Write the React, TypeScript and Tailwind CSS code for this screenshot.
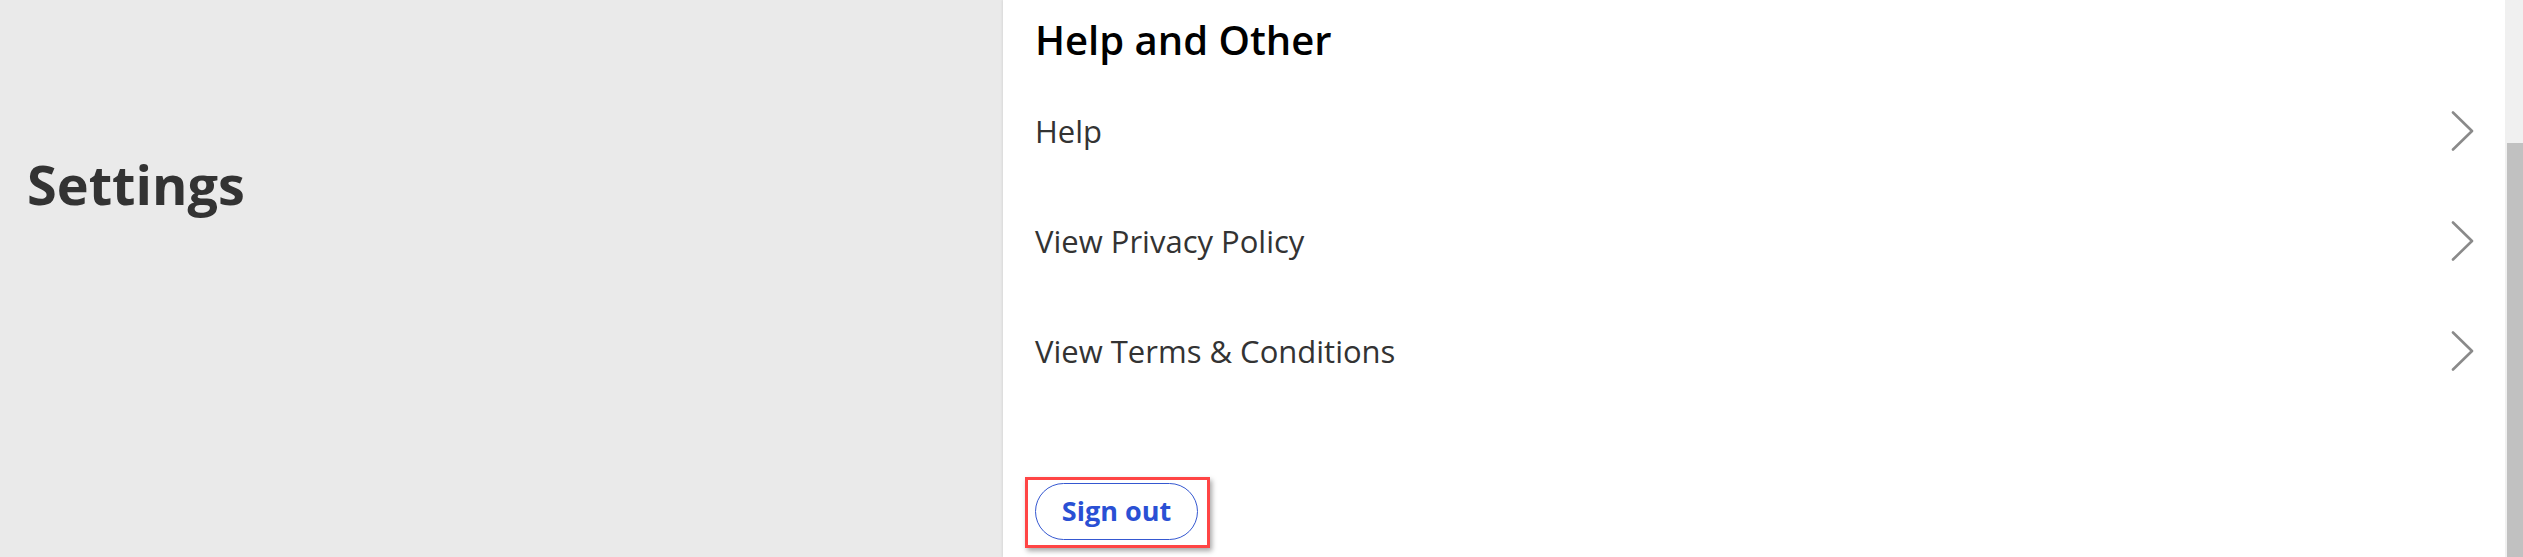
import { ReactNode } from "react";

const LINKS = ["Help", "View Privacy Policy", "View Terms & Conditions"];

function Chevron() {
  return (
    <svg width="23" height="40" viewBox="0 0 23 40" fill="none" className="shrink-0">
      <path d="M2 1.5 L21 20 L2 38.5" stroke="#8a8a8a" strokeWidth="2.6" strokeLinecap="round" strokeLinejoin="round" />
    </svg>
  );
}

function Row({ children }: { children: ReactNode }) {
  return (
    <div className="flex h-[110px] items-center justify-between pr-[31px]">
      <span className="text-[31px] leading-none text-[#333333]">{children}</span>
      <Chevron />
    </div>
  );
}

export default function App() {
  return (
    <div
      className="flex h-[557px] w-full overflow-hidden bg-[#eaeaea]"
      style={{ fontFamily: '"Open Sans", "Noto Sans", sans-serif' }}
    >
      {/* left side */}
      <aside className="w-[1003px] shrink-0 pl-[27px] pt-[157px]">
        <h1 className="text-[54px] font-bold leading-none text-[#333333]">Settings</h1>
      </aside>

      {/* content panel */}
      <main className="flex flex-1 flex-col bg-white pl-[32px] pt-[4px] shadow-[-1px_0_2px_rgba(0,0,0,0.08)]">
        <h2 className="flex h-[72px] items-center text-[40px] font-semibold leading-none text-black">
          Help and Other
        </h2>
        {LINKS.map((l) => (
          <Row key={l}>{l}</Row>
        ))}
        <div className="mt-[71px] -ml-[10px] self-start border-[3px] border-[#ff4545] pt-[3px] pb-[5px] pl-[7px] pr-[9px] shadow-[2px_3px_5px_rgba(0,0,0,0.35)]">
          <button className="flex h-[57px] w-[163px] items-center justify-center rounded-full border-[1.5px] border-[#3558d1] text-[27px] font-bold text-[#2a50d4]">
            Sign out
          </button>
        </div>
      </main>

      {/* scrollbar */}
      <div className="flex w-[18px] shrink-0 flex-col bg-[#f0f0f0]">
        <div className="h-[143px]" />
        <div className="ml-[2px] flex-1 bg-[#c1c1c1]" />
      </div>
    </div>
  );
}
